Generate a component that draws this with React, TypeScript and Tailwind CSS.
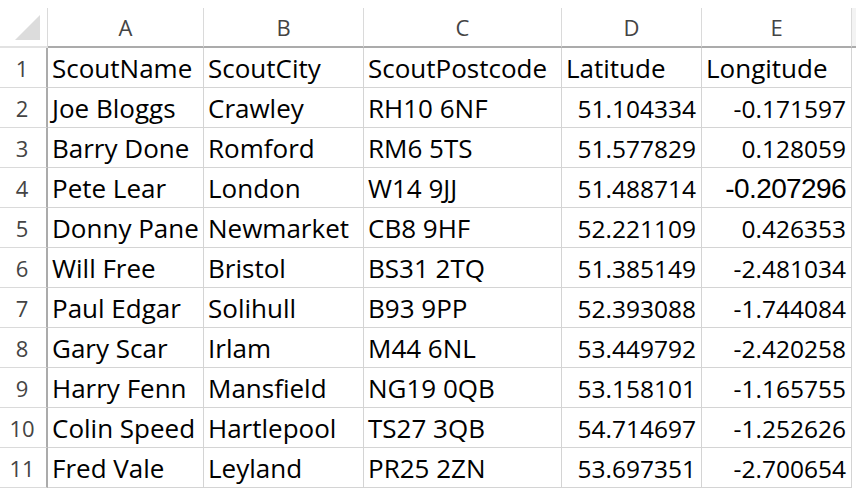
import React from 'react';

type Row = [string, string, string, string, string];

const rows: Row[] = [
  ['ScoutName', 'ScoutCity', 'ScoutPostcode', 'Latitude', 'Longitude'],
  ['Joe Bloggs', 'Crawley', 'RH10 6NF', '51.104334', '-0.171597'],
  ['Barry Done', 'Romford', 'RM6 5TS', '51.577829', '0.128059'],
  ['Pete Lear', 'London', 'W14 9JJ', '51.488714', '-0.207296'],
  ['Donny Pane', 'Newmarket', 'CB8 9HF', '52.221109', '0.426353'],
  ['Will Free', 'Bristol', 'BS31 2TQ', '51.385149', '-2.481034'],
  ['Paul Edgar', 'Solihull', 'B93 9PP', '52.393088', '-1.744084'],
  ['Gary Scar', 'Irlam', 'M44 6NL', '53.449792', '-2.420258'],
  ['Harry Fenn', 'Mansfield', 'NG19 0QB', '53.158101', '-1.165755'],
  ['Colin Speed', 'Hartlepool', 'TS27 3QB', '54.714697', '-1.252626'],
  ['Fred Vale', 'Leyland', 'PR25 2ZN', '53.697351', '-2.700654'],
];

const cols = ['A', 'B', 'C', 'D', 'E'];
const widths = ['w-[156px]', 'w-[160px]', 'w-[198px]', 'w-[140px]', 'w-[150px]'];

const App: React.FC = () => {
  return (
    <div className="w-[856px] h-[488px] bg-white overflow-hidden font-['Open_Sans',sans-serif] text-black">
      <div className="h-[8px]" />
      {/* column headers */}
      <div className="flex h-[40px]">
        <div className="w-[48px] shrink-0 border-r border-r-[#dadada] border-b-2 border-b-[#e2e2e2] relative">
          <div
            className="absolute left-[15px] top-[7px] w-[25px] h-[25px] bg-[#dcdcdc]"
            style={{ clipPath: 'polygon(100% 0, 100% 100%, 0 100%)' }}
          />
        </div>
        {cols.map((c, i) => (
          <div
            key={c}
            className={`${widths[i]} shrink-0 border-r border-r-[#dadada] border-b-2 border-b-[#ababab] flex items-center justify-center text-[22px] text-[#444] pt-[1px]`}
          >
            {c}
          </div>
        ))}
        <div className="flex-1 bg-[#f3f3f3] border-b-2 border-b-[#ababab]" />
      </div>
      {rows.map((r, ri) => (
        <div key={ri} className="flex h-[40px]">
          <div className="w-[48px] shrink-0 border-r-2 border-r-[#ababab] border-b border-b-[#dadada] flex items-center justify-center pr-[2px] pt-[2px] text-[22px] text-[#444]">
            {ri + 1}
          </div>
          {r.map((v, ci) => {
            const numeric = ri > 0 && ci >= 3;
            const odd = ri === 3 && ci === 4;
            return (
              <div
                key={ci}
                className={`${widths[ci]} shrink-0 border-r border-b border-[#d4d4d4] flex items-center whitespace-nowrap overflow-visible ${
                  numeric ? 'justify-end pr-[5px] pt-[3px]' : 'pl-[4px] pt-[1px]'
                } ${
                  odd
                    ? "font-['Liberation_Sans',sans-serif] text-[28px] tracking-[-0.6px]"
                    : numeric
                    ? 'text-[24.5px]'
                    : 'text-[26px]'
                }`}
              >
                {v}
              </div>
            );
          })}
          <div className="flex-1" />
        </div>
      ))}
    </div>
  );
};

export default App;
